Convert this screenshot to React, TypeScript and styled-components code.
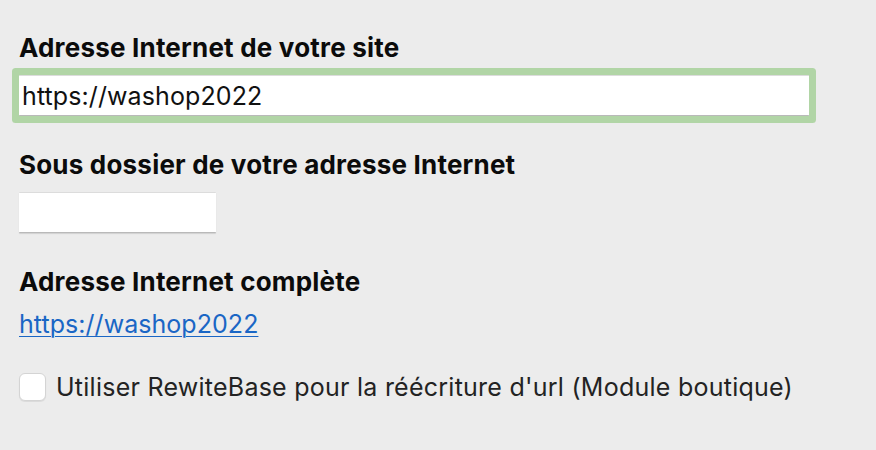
import React, { useEffect, useRef, useState } from "react";
import styled, { createGlobalStyle } from "styled-components";

const GlobalStyle = createGlobalStyle`
  html, body {
    margin: 0;
    padding: 0;
    background: #ececec;
  }
  body {
    font-family: Inter, "Liberation Sans", sans-serif;
    color: #111;
  }
`;

const Page = styled.div`
  display: flex;
  flex-direction: column;
  padding: 32px 19px 0;
`;

const Field = styled.div`
  display: flex;
  flex-direction: column;
  align-items: flex-start;
  margin-bottom: 33px;
`;

const Label = styled.label`
  font-size: 26px;
  font-weight: 700;
  letter-spacing: 0.2px;
  line-height: 32px;
  color: #0b0b0b;
  margin-bottom: 11px;
`;

const TextInput = styled.input<{ $focused?: boolean; $width: number }>`
  box-sizing: border-box;
  width: ${(p) => p.$width}px;
  height: 41px;
  padding: 0 3px;
  border: 0;
  border-top: 1px solid #dcdcdc;
  border-bottom: 1px solid #b9b9b9;
  background: #fff;
  font-family: Inter, "Liberation Sans", sans-serif;
  font-size: 25px;
  letter-spacing: 0.1px;
  color: #111;
  border-radius: 1px;
  box-shadow: ${(p) =>
    p.$focused ? "0 0 0 7px #b1d5a6" : "0 1px 1px rgba(0, 0, 0, 0.12)"};
  outline: none;
  caret-color: #000;
`;

const Link = styled.a`
  font-size: 25px;
  letter-spacing: 0.05px;
  line-height: 30px;
  color: #1a66c5;
  text-decoration: underline;
  text-underline-offset: 3px;
  text-decoration-thickness: 1px;
`;

const CheckRow = styled.label`
  display: flex;
  align-items: center;
  gap: 10px;
  font-size: 25px;
  line-height: 30px;
  letter-spacing: 0.25px;
  color: #232323;
`;

const Box = styled.span<{ $checked: boolean }>`
  box-sizing: border-box;
  width: 27px;
  height: 28px;
  border-radius: 6px;
  background: ${(p) => (p.$checked ? "#1a66c5" : "#fff")};
  border: 1px solid #d4d4d4;
  box-shadow: 0 1px 1px rgba(0, 0, 0, 0.08);
  flex-shrink: 0;
`;

export default function App() {
  const [site, setSite] = useState("https://washop2022");
  const [folder, setFolder] = useState("");
  const [rewrite, setRewrite] = useState(false);
  const siteRef = useRef<HTMLInputElement>(null);
  const full = folder ? `${site}/${folder}` : site;

  useEffect(() => {
    const el = siteRef.current;
    if (el) {
      el.focus();
      el.setSelectionRange(el.value.length, el.value.length);
    }
  }, []);

  return (
    <>
      <GlobalStyle />
      <Page>
        <Field>
          <Label>Adresse Internet de votre site</Label>
          <TextInput
            ref={siteRef}
            $focused
            $width={790}
            value={site}
            onChange={(e) => setSite(e.target.value)}
          />
        </Field>
        <Field>
          <Label>Sous dossier de votre adresse Internet</Label>
          <TextInput
            $width={197}
            value={folder}
            onChange={(e) => setFolder(e.target.value)}
          />
        </Field>
        <Field>
          <Label>Adresse Internet complète</Label>
          <Link href="#">{full}</Link>
        </Field>
        <CheckRow onClick={() => setRewrite(!rewrite)}>
          <Box $checked={rewrite} />
          Utiliser RewiteBase pour la réécriture d'url (Module boutique)
        </CheckRow>
      </Page>
    </>
  );
}
